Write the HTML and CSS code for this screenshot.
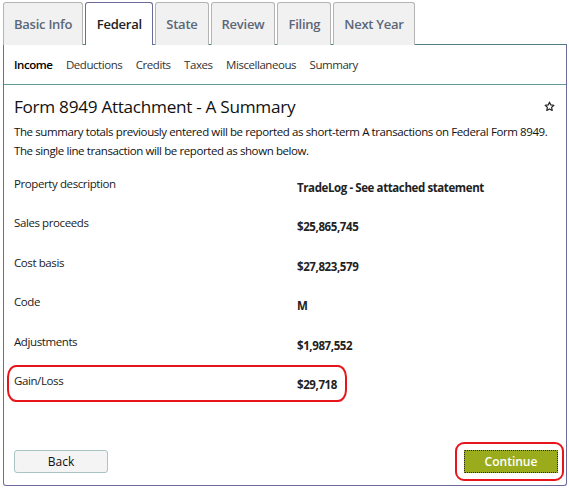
FILE: index.html
```html
<!DOCTYPE html>
<html lang="en">
<head>
    <meta charset="UTF-8">
    <title>Form 8949 Attachment - A Summary</title>
    <link rel="stylesheet" href="styles.css">
</head>
<body>
    <div id="tabs">
        <div class="tab">Basic Info</div>
        <div class="tab active">Federal</div>
        <div class="tab">State</div>
        <div class="tab">Review</div>
        <div class="tab">Filing</div>
        <div class="tab">Next Year</div>
    </div>
    <div id="panel">
        <div id="subnav">
            <span class="current">Income</span>
            <span>Deductions</span>
            <span>Credits</span>
            <span>Taxes</span>
            <span>Miscellaneous</span>
            <span>Summary</span>
        </div>
        <div id="content">
            <div class="head">
                <h1>Form 8949 Attachment - A Summary</h1>
                <svg class="star" width="11" height="11" viewBox="0 0 24 24">
                    <path d="M12 2.5l2.9 6.1 6.6.8-4.9 4.6 1.3 6.6L12 17.3l-5.9 3.3 1.3-6.6-4.9-4.6 6.6-.8z" fill="none" stroke="#222" stroke-width="2.6" stroke-linejoin="round"/>
                </svg>
            </div>
            <p class="intro">The summary totals previously entered will be reported as short-term A transactions on Federal Form 8949.<br>The single line transaction will be reported as shown below.</p>
            <div class="rows">
                <div class="row"><span class="label">Property description</span><span class="value">TradeLog - See attached statement</span></div>
                <div class="row"><span class="label">Sales proceeds</span><span class="value">$25,865,745</span></div>
                <div class="row"><span class="label">Cost basis</span><span class="value">$27,823,579</span></div>
                <div class="row"><span class="label">Code</span><span class="value">M</span></div>
                <div class="row"><span class="label">Adjustments</span><span class="value">$1,987,552</span></div>
                <div class="row marked"><span class="label">Gain/Loss</span><span class="value">$29,718</span></div>
            </div>
            <div class="buttons">
                <button class="back">Back</button>
                <button class="continue">Continue</button>
            </div>
        </div>
    </div>
</body>
</html>
```

FILE: styles.css
```css
*{
    margin: 0;
    padding: 0;
    box-sizing: border-box;
}
body{
    font-family: "Open Sans", "DejaVu Sans", sans-serif;
    color: #1a1a1a;
    background: #fff;
    width: 569px;
    height: 491px;
    overflow: hidden;
}
#tabs{
    display: flex;
    gap: 2px;
    padding: 2px 0 0 3px;
    height: 45px;
    position: relative;
    z-index: 1;
}
.tab{
    height: 43px;
    padding: 0 10px;
    border: 1px solid #b4b4b4;
    border-bottom: none;
    border-radius: 3px 3px 0 0;
    background: #f1f1f1;
    color: #5b6778;
    font-size: 13px;
    font-weight: 600;
    letter-spacing: -0.25px;
    display: flex;
    align-items: center;
}
.tab.active{
    background: #fff;
    color: #222;
    border-color: #6c6a9a;
    padding: 0 10.5px;
}
#panel{
    margin: -1px 2px 0 3px;
    height: 442px;
    border: 1px solid #6c6a9a;
    border-top-color: #4f7f86;
    border-radius: 0 0 3px 3px;
    display: flex;
    flex-direction: column;
}
#subnav{
    height: 40px;
    border-bottom: 1px solid #5f9a9a;
    display: flex;
    align-items: center;
    gap: 13.5px;
    padding: 0 0 1px 10px;
    font-size: 11.5px;
    letter-spacing: -0.45px;
    color: #333;
}
#subnav .current{
    color: #000;
    font-weight: 600;
}
#content{
    flex: 1;
    display: flex;
    flex-direction: column;
    padding: 10px 8px 12px 10px;
}
.head{
    display: flex;
    justify-content: space-between;
    align-items: center;
    height: 23px;
}
.head h1{
    font-size: 17.2px;
    font-weight: 400;
    letter-spacing: -0.3px;
    color: #111;
}
.star{
    margin-right: 3px;
}
.intro{
    margin-top: 4px;
    font-size: 11.5px;
    line-height: 19px;
    letter-spacing: -0.4px;
    color: #111;
    white-space: nowrap;
}
.rows{
    margin-top: 16px;
}
.row{
    display: grid;
    grid-template-columns: 283px 1fr;
    height: 39.4px;
    font-size: 11.5px;
    position: relative;
}
.label{
    letter-spacing: -0.4px;
}
.value{
    font-weight: 700;
    font-size: 11.5px;
    letter-spacing: -0.4px;
    padding-top: 4px;
    color: #222;
}
.row.marked::after{
    content: "";
    position: absolute;
    left: -7px;
    top: -8px;
    width: 336px;
    height: 33px;
    border: 2px solid #e8141b;
    border-radius: 9px / 12px;
}
.buttons{
    margin-top: auto;
    display: flex;
    justify-content: space-between;
    align-items: center;
}
.buttons button{
    font-family: inherit;
    font-size: 12px;
    height: 23px;
    cursor: pointer;
}
.back{
    width: 94px;
    background: #f4f4f4;
    border: 1px solid #a9c4c4;
    border-radius: 3px;
    color: #111;
}
.continue{
    width: 94px;
    height: 22px;
    background: #9aac1c;
    border: 1px dotted #222;
    color: #fff;
    font-weight: 600;
    border-radius: 1px;
    position: relative;
}
.continue::after{
    content: "";
    position: absolute;
    left: -10px;
    right: -7px;
    top: -9px;
    bottom: -9px;
    border: 2px solid #e8141b;
    border-radius: 9px;
}
```
